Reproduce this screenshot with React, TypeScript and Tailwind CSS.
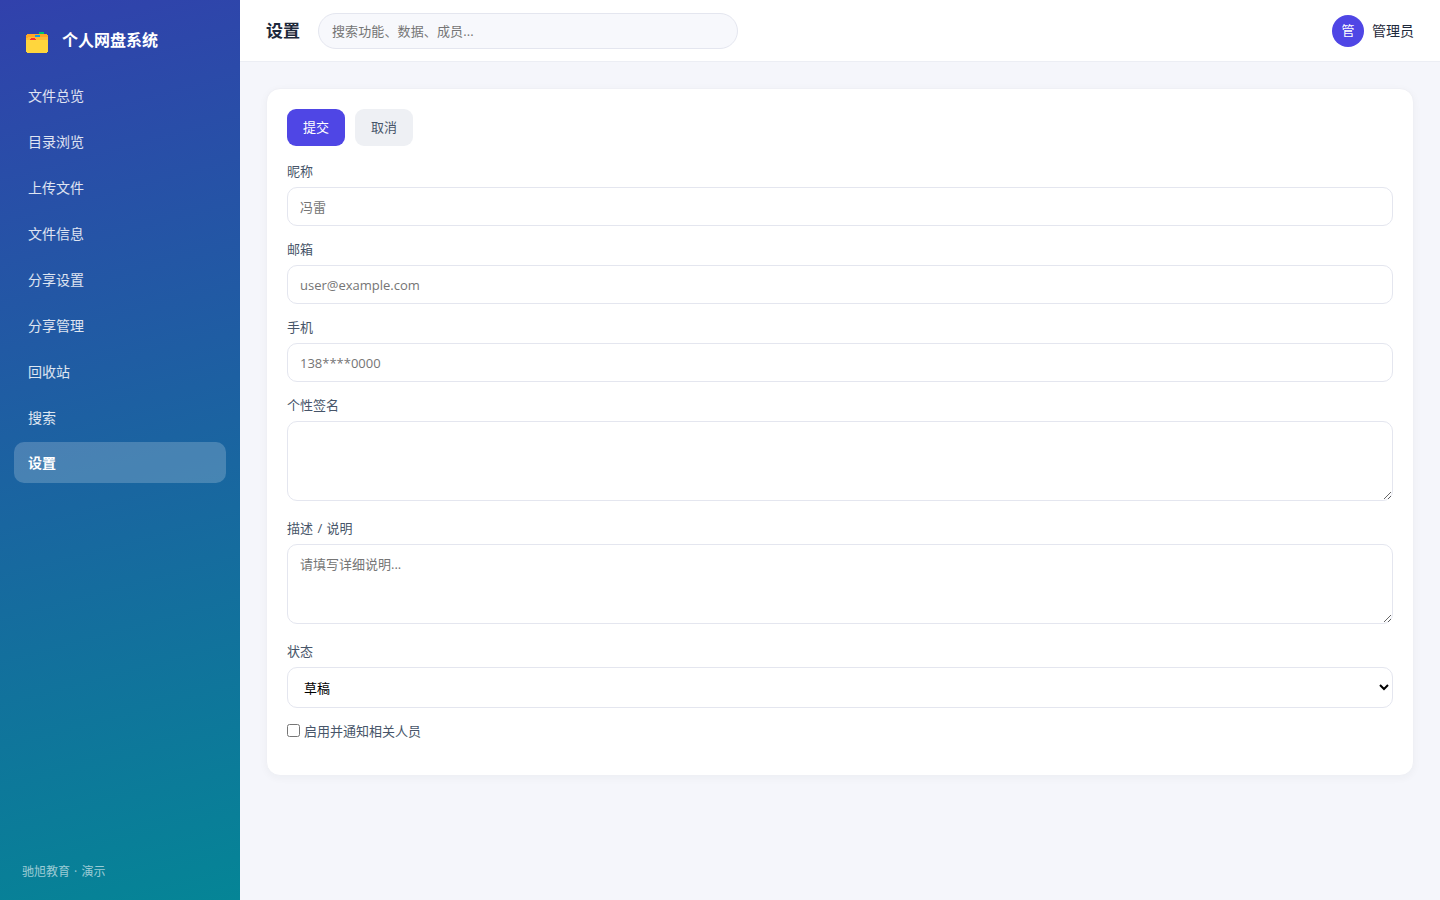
import type { ReactNode } from "react";

const navItems = ["文件总览", "目录浏览", "上传文件", "文件信息", "分享设置", "分享管理", "回收站", "搜索", "设置"];

const fieldClass =
  "block w-full rounded-[10px] border border-[#e4e6ef] bg-white px-3 text-[13px] text-black outline-none placeholder:text-[#757575]";

function FolderIcon() {
  return (
    <svg width="22" height="21" viewBox="0 0 22 21" className="mt-[3px] shrink-0" shapeRendering="crispEdges">
      <rect x="13" y="0" width="5" height="2" fill="#00c967" />
      <path d="M1 2H21V3H22V10H0V3H1Z" fill="#ffa726" />
      <path d="M0 6L3 5H22V10H0Z" fill="#ffbb35" />
      <rect x="9" y="3" width="5" height="2" fill="#129ce8" />
      <path d="M0 8H22V20H21V21H1V20H0Z" fill="#ffd63d" />
      <path d="M5 6H9V7H10V8H4V7H5Z" fill="#f8312f" />
    </svg>
  );
}

function Field({ label, last, tall, children }: { label: string; last?: boolean; tall?: boolean; children: ReactNode }) {
  return (
    <div className={last ? "mb-[14px]" : tall ? "mb-[19px]" : "mb-[15px]"}>
      <label className="mb-[6px] block h-[18px] text-[13px] leading-[17px] text-[#475569] [word-spacing:1px]">{label}</label>
      {children}
    </div>
  );
}

export default function App() {
  return (
    <div className="flex h-[900px] w-full bg-[#f5f6fb] font-['Open_Sans','Noto_Sans_CJK_SC',sans-serif] text-[#1e293b]">
      <aside className="flex w-60 shrink-0 flex-col bg-[linear-gradient(165deg,#3141ac_0%,#058596_100%)] px-[14px]">
        <div className="flex h-[74px] items-start gap-[14px] pt-[29px] pl-3 text-white">
          <FolderIcon />
          <span className="text-base leading-[23px] font-bold">个人网盘系统</span>
        </div>
        <nav className="flex flex-col gap-[5px]">
          {navItems.map((item) => (
            <a
              key={item}
              className={
                item === "设置"
                  ? "flex h-[41px] items-center rounded-[10px] bg-white/20 px-[14px] text-sm font-bold text-white"
                  : "flex h-[41px] items-center rounded-[10px] px-[14px] pt-[2px] text-sm text-white/85"
              }
            >
              {item}
            </a>
          ))}
        </nav>
        <div className="mt-auto mb-[19px] pl-2 text-xs leading-[18px] [word-spacing:1px] text-white/60">驰旭教育 · 演示</div>
      </aside>

      <div className="flex min-w-0 flex-1 flex-col">
        <header className="flex h-[62px] shrink-0 items-center border-b border-[#eceef4] bg-white px-[26px]">
          <h1 className="mr-[18px] text-[17px] font-bold">设置</h1>
          <input
            placeholder="搜索功能、数据、成员..."
            className="h-9 w-[420px] rounded-full border border-[#e4e6ef] bg-[#f7f8fc] px-[13px] text-[13px] tracking-[0.12px] outline-none placeholder:text-[#757575]"
          />
          <div className="ml-auto flex items-center gap-2">
            <div className="flex size-8 items-center justify-center rounded-full bg-[#4f46e5] text-[13px] text-white">管</div>
            <span className="pt-px text-sm">管理员</span>
          </div>
        </header>

        <main className="p-[26px]">
          <section className="h-[688px] rounded-[14px] border border-[#eff0f5] bg-white p-5 shadow-[0_2px_8px_rgba(30,41,59,0.04)]">
            <div className="mb-[17px] flex gap-[10px]">
              <button className="h-[37px] w-[58px] rounded-[9px] bg-[#4f46e5] text-[13px] text-white">提交</button>
              <button className="h-[37px] w-[58px] rounded-[9px] bg-[#eef0f4] text-[13px] text-[#475569]">取消</button>
            </div>
            <Field label="昵称">
              <input placeholder="冯雷" className={`${fieldClass} h-[39px]`} />
            </Field>
            <Field label="邮箱">
              <input placeholder="user@example.com" className={`${fieldClass} h-[39px]`} />
            </Field>
            <Field label="手机">
              <input placeholder="138****0000" className={`${fieldClass} h-[39px]`} />
            </Field>
            <Field label="个性签名" tall>
              <textarea className={`${fieldClass} h-20 resize-y py-[10px]`} />
            </Field>
            <Field label="描述 / 说明" tall>
              <textarea placeholder="请填写详细说明..." className={`${fieldClass} h-20 resize-y py-[10px] leading-[18px]`} />
            </Field>
            <Field label="状态" last>
              <select className={`${fieldClass} h-[41px]`}>
                <option>草稿</option>
                <option>已发布</option>
              </select>
            </Field>
            <label className="flex h-5 items-center gap-1 text-[13px] text-[#475569]">
              <input type="checkbox" className="mb-[3px] size-[13px]" />
              启用并通知相关人员
            </label>
          </section>
        </main>
      </div>
    </div>
  );
}
